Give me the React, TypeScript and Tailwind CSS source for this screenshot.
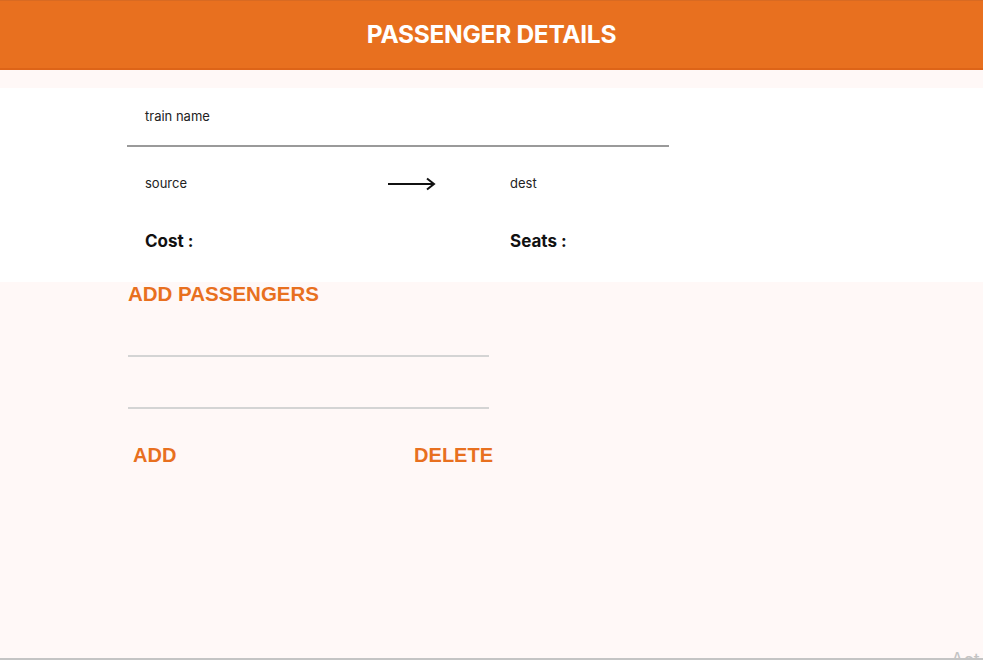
import React from "react";

export default function App() {
  return (
    <div className="w-[983px] h-[660px] bg-[#fff8f7] flex flex-col overflow-hidden relative" style={{ fontFamily: "Inter, 'Noto Sans', sans-serif" }}>
      <header className="h-[70px] shrink-0 bg-[#e8701f] border-t border-t-[#d86a22] border-b-2 border-b-[#dd6418] flex items-center justify-center">
        <h1 className="text-white font-bold text-[24.5px] tracking-[-0.3px]">PASSENGER DETAILS</h1>
      </header>
      <div className="h-[18px] shrink-0" />
      <section className="bg-white h-[194px] shrink-0 flex flex-col">
        <div className="w-[542px] ml-[127px] h-[59px] border-b-2 border-[#9a9a9a] flex items-center pl-[18px] pt-[1px]">
          <span className="text-[13px] text-[#222]">train name</span>
        </div>
        <div className="flex items-center ml-[145px] mt-[26px] h-[22px] text-[13px] text-[#222]">
          <span className="w-[243px]">source</span>
          <svg width="48" height="14" viewBox="0 0 48 14" className="block">
            <line x1="0" y1="7" x2="46" y2="7" stroke="#111" strokeWidth="2" />
            <polyline points="39,1.5 46,7 39,12.5" fill="none" stroke="#111" strokeWidth="2" />
          </svg>
          <span className="ml-[74px]">dest</span>
        </div>
        <div className="flex items-center ml-[145px] mt-[36px] h-[22px] text-[17px] font-bold text-[#111]">
          <span className="w-[365px]">Cost :</span>
          <span>Seats :</span>
        </div>
      </section>
      <div className="ml-[128px] flex flex-col w-[365px]" style={{ fontFamily: "'Liberation Sans', Arial, sans-serif" }}>
        <h2 className="text-[#e8701f] font-bold text-[20.5px] leading-[24px]">ADD PASSENGERS</h2>
        <div className="w-[361px] h-[2px] bg-[#d4d4d4] mt-[49px]" />
        <div className="w-[361px] h-[2px] bg-[#d4d4d4] mt-[50px]" />
        <div className="flex justify-between items-center mt-[31px] pl-[5px] text-[#e8701f] font-bold text-[20px]">
          <button>ADD</button>
          <button>DELETE</button>
        </div>
      </div>
      <div className="absolute left-0 right-0 bottom-0 h-[2px] bg-[#c4c4c4]" />
      <span className="absolute left-[951px] top-[649px] text-[18px] leading-[22px] text-[#c4c4c4]">Act</span>
    </div>
  );
}
